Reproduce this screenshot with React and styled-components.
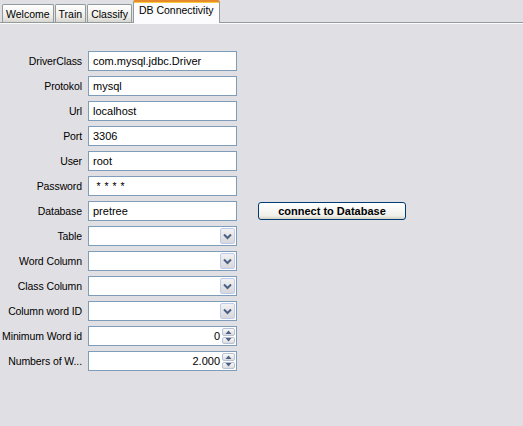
import React from "react";
import styled, { createGlobalStyle, css } from "styled-components";

const GlobalStyle = createGlobalStyle`
    html, body {
        margin: 0;
        padding: 0;
        background: #e0dfe3;
        font-family: "Liberation Sans", Arial, sans-serif;
        font-size: 11px;
        color: #000;
    }
`;

const Window = styled.div`
    width: 523px;
    height: 426px;
    background: #e0dfe3;
    overflow: hidden;
`;

const TabStrip = styled.div`
    display: flex;
    align-items: flex-end;
    height: 22px;
    padding-left: 2px;
    border-bottom: 1px solid #919b9c;
    background: #e0dfe3;
`;

const Tab = styled.div`
    height: 17px;
    padding: 0 3px;
    margin-right: 1px;
    display: flex;
    align-items: center;
    font-size: 10.5px;
    border: 1px solid #919b9c;
    border-bottom: none;
    border-radius: 2px 2px 0 0;
    background: linear-gradient(#ffffff, #ecebe6 70%, #d6d5d0);
    ${({ active }) =>
        active &&
        css`
            height: 20px;
            margin-bottom: -1px;
            padding: 0 5px 1px;
            align-items: flex-start;
            background: #fcfcfe;
            border-top: 2px solid #e68b2c;
            box-shadow: inset 0 1px 0 #ffc73c;
            & > span {
                padding-top: 2px;
            }
        `}
`;

const Content = styled.div`
    border-top: 1px solid #fcfcfe;
    padding-top: 27px;
`;

const Form = styled.div`
    display: grid;
    grid-template-columns: 82px 149px auto;
    grid-auto-rows: 20px;
    column-gap: 6px;
    row-gap: 5px;
`;

const Label = styled.div`
    grid-column: 1;
    display: flex;
    align-items: center;
    justify-content: flex-end;
    white-space: nowrap;
    font-size: 10.5px;
    letter-spacing: -0.1px;
    color: #000;
`;

const FieldBox = styled.div`
    grid-column: 2;
    display: flex;
    box-sizing: border-box;
    height: 20px;
    border: 1px solid #7f9db9;
    background: #fff;
    padding: 1px;
`;

const FieldText = styled.div`
    flex: 1;
    display: flex;
    align-items: center;
    padding: 0 ${({ right }) => (right ? "2px" : "3px")};
    justify-content: ${({ right }) => (right ? "flex-end" : "flex-start")};
    white-space: nowrap;
    overflow: hidden;
    font-size: ${({ secret }) => (secret ? "10.5px" : "11px")};
    letter-spacing: ${({ secret }) => (secret ? "0.5px" : "0")};
`;

const ComboButton = styled.div`
    width: 15px;
    display: flex;
    align-items: center;
    justify-content: center;
    border: 1px solid #bcccf0;
    border-radius: 2px;
    background: linear-gradient(#f2f2f2, #d8d8dc);
    box-sizing: border-box;
`;

const SpinButtons = styled.div`
    width: 13px;
    display: flex;
    flex-direction: column;
    gap: 1px;
`;

const SpinButton = styled.div`
    flex: 1;
    display: flex;
    align-items: center;
    justify-content: center;
    border: 1px solid #b8c0d4;
    border-radius: 2px;
    background: linear-gradient(#fafafa, #dcdce0);
`;

const ConnectButton = styled.button`
    grid-column: 3;
    margin-left: 15px;
    width: 148px;
    height: 18px;
    align-self: center;
    border: 1px solid #003c74;
    border-radius: 3px;
    background: linear-gradient(#ffffff, #f0f0ea 80%, #d6d0c5);
    font-family: "Liberation Sans", Arial, sans-serif;
    font-size: 11px;
    font-weight: bold;
    color: #000;
    padding: 0;
`;

const Chevron = () => (
    <svg width="9" height="7" viewBox="0 0 9 7">
        <path d="M1 1.5 L4.5 5 L8 1.5" fill="none" stroke="#4d6185" strokeWidth="2" />
    </svg>
);

const Arrow = ({ up }) => (
    <svg width="7" height="4" viewBox="0 0 7 4">
        <path d={up ? "M0.5 4 L3.5 0.5 L6.5 4 Z" : "M0.5 0 L3.5 3.5 L6.5 0 Z"} fill="#4d6185" />
    </svg>
);

const textFields = [
    ["DriverClass", "com.mysql.jdbc.Driver"],
    ["Protokol", "mysql"],
    ["Url", "localhost"],
    ["Port", "3306"],
    ["User", "root"],
    ["Password", "****", true],
    ["Database", "pretree"],
];

const combos = ["Table", "Word Column", "Class Column", "Column word ID"];

const spinners = [
    ["Minimum Word id", "0"],
    ["Numbers of W...", "2.000"],
];

const App = () => {
    return (
        <Window>
            <GlobalStyle />
            <TabStrip>
                <Tab><span>Welcome</span></Tab>
                <Tab><span>Train</span></Tab>
                <Tab><span>Classify</span></Tab>
                <Tab active><span>DB Connectivity</span></Tab>
            </TabStrip>
            <Content>
                <Form>
                    {textFields.map(([label, value, secret]) => (
                        <React.Fragment key={label}>
                            <Label>{label}</Label>
                            <FieldBox>
                                <FieldText secret={secret}>
                                    {secret ? "\u00a0" + value.split("").join(" ") : value}
                                </FieldText>
                            </FieldBox>
                            {label === "Database" && <ConnectButton>connect to Database</ConnectButton>}
                        </React.Fragment>
                    ))}
                    {combos.map((label) => (
                        <React.Fragment key={label}>
                            <Label>{label}</Label>
                            <FieldBox>
                                <FieldText />
                                <ComboButton><Chevron /></ComboButton>
                            </FieldBox>
                        </React.Fragment>
                    ))}
                    {spinners.map(([label, value]) => (
                        <React.Fragment key={label}>
                            <Label>{label}</Label>
                            <FieldBox>
                                <FieldText right>{value}</FieldText>
                                <SpinButtons>
                                    <SpinButton><Arrow up /></SpinButton>
                                    <SpinButton><Arrow /></SpinButton>
                                </SpinButtons>
                            </FieldBox>
                        </React.Fragment>
                    ))}
                </Form>
            </Content>
        </Window>
    );
};

export default App;
